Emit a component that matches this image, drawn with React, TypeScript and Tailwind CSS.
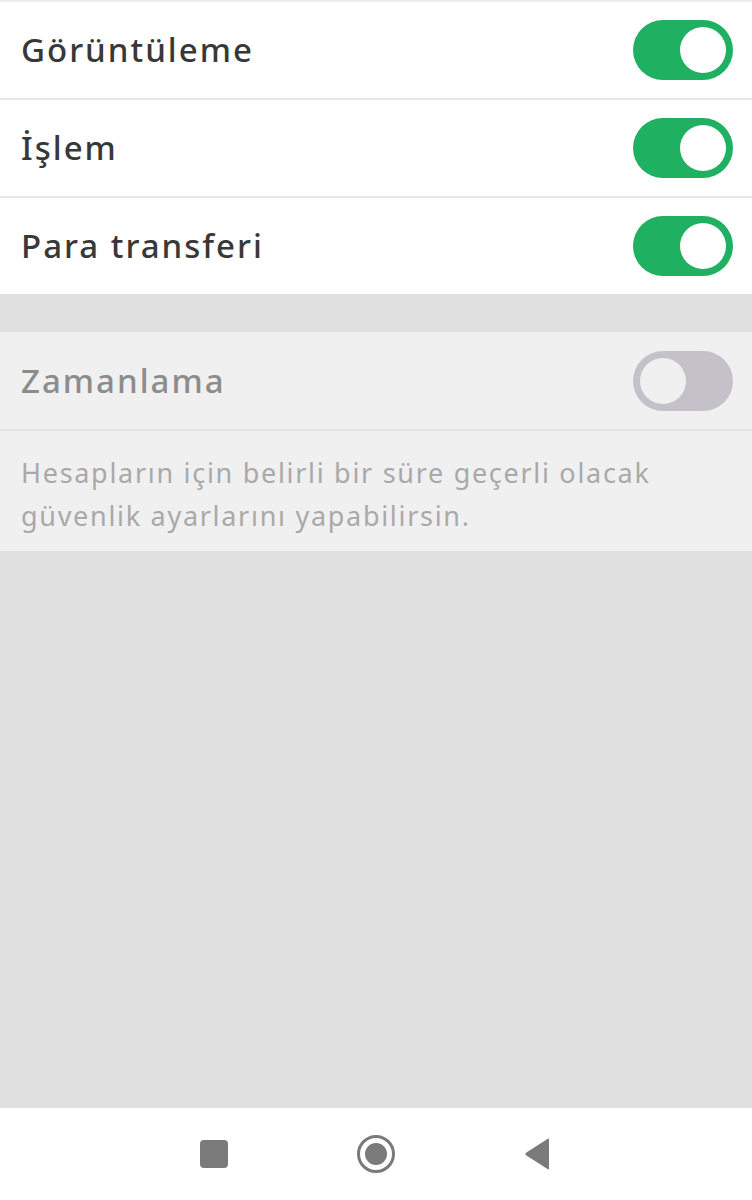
import { useState } from "react";

type ToggleProps = {
  on: boolean;
  disabled?: boolean;
  onChange?: (v: boolean) => void;
};

function Toggle({ on, disabled, onChange }: ToggleProps) {
  return (
    <button
      type="button"
      onClick={() => !disabled && onChange?.(!on)}
      className={`flex h-[60px] w-[100px] shrink-0 items-center rounded-full px-[7px] ${
        on ? "justify-end bg-[#20b062]" : "justify-start bg-[#c4c2c8]"
      }`}
    >
      <span
        className={`block h-[46px] w-[46px] rounded-full ${
          on ? "bg-white" : "bg-[#f0f0f0]"
        }`}
      />
    </button>
  );
}

function Row({
  label,
  on,
  onChange,
}: {
  label: string;
  on: boolean;
  onChange: (v: boolean) => void;
}) {
  return (
    <div className="flex h-[96px] items-center justify-between bg-white pl-[21px] pr-[19px]">
      <span className="text-[33px] font-medium tracking-[2px] text-[#383838]">{label}</span>
      <Toggle on={on} onChange={onChange} />
    </div>
  );
}

export default function App() {
  const [view, setView] = useState(true);
  const [tx, setTx] = useState(true);
  const [transfer, setTransfer] = useState(true);

  return (
    <div
      className="flex h-[1200px] w-[752px] flex-col bg-[#e0e0e0]"
      style={{ fontFamily: "'Noto Sans', 'DejaVu Sans', sans-serif" }}
    >
      <div className="h-[2px] bg-[#ececec]" />
      <Row label="Görüntüleme" on={view} onChange={setView} />
      <div className="h-[2px] bg-[#e6e6e6]" />
      <Row label="İşlem" on={tx} onChange={setTx} />
      <div className="h-[2px] bg-[#e6e6e6]" />
      <Row label="Para transferi" on={transfer} onChange={setTransfer} />

      <div className="h-[38px]" />

      <div className="bg-[#f0f0f0]">
        <div className="flex h-[97px] items-center justify-between pl-[21px] pr-[19px]">
          <span className="text-[33px] font-medium tracking-[2px] text-[#8c8c8c]">Zamanlama</span>
          <Toggle on={false} disabled />
        </div>
        <div className="h-[2px] bg-[#e3e3e3]" />
        <p className="px-[21px] pb-[14px] pt-[20px] text-[27px] leading-[43px] tracking-[1.7px] text-[#a9a9a9]">
          Hesapların için belirli bir süre geçerli olacak
          <br />
          güvenlik ayarlarını yapabilirsin.
        </p>
      </div>

      <div className="flex-1" />

      <div className="flex h-[92px] items-center justify-center gap-[128px] bg-white">
        <svg width="28" height="28" viewBox="0 0 28 28">
          <rect x="0" y="0" width="28" height="28" rx="4" fill="#7a7a7a" />
        </svg>
        <svg width="40" height="40" viewBox="0 0 40 40">
          <circle cx="20" cy="20" r="17.5" fill="none" stroke="#7a7a7a" strokeWidth="3" />
          <circle cx="20" cy="20" r="11" fill="#7a7a7a" />
        </svg>
        <svg width="28" height="32" viewBox="0 0 28 32">
          <path d="M25 1.5 L25 30.5 Q25 32 23.5 31 L2 17.2 Q0.5 16 2 14.8 L23.5 1 Q25 0 25 1.5 Z" fill="#7a7a7a" />
        </svg>
      </div>
    </div>
  );
}
